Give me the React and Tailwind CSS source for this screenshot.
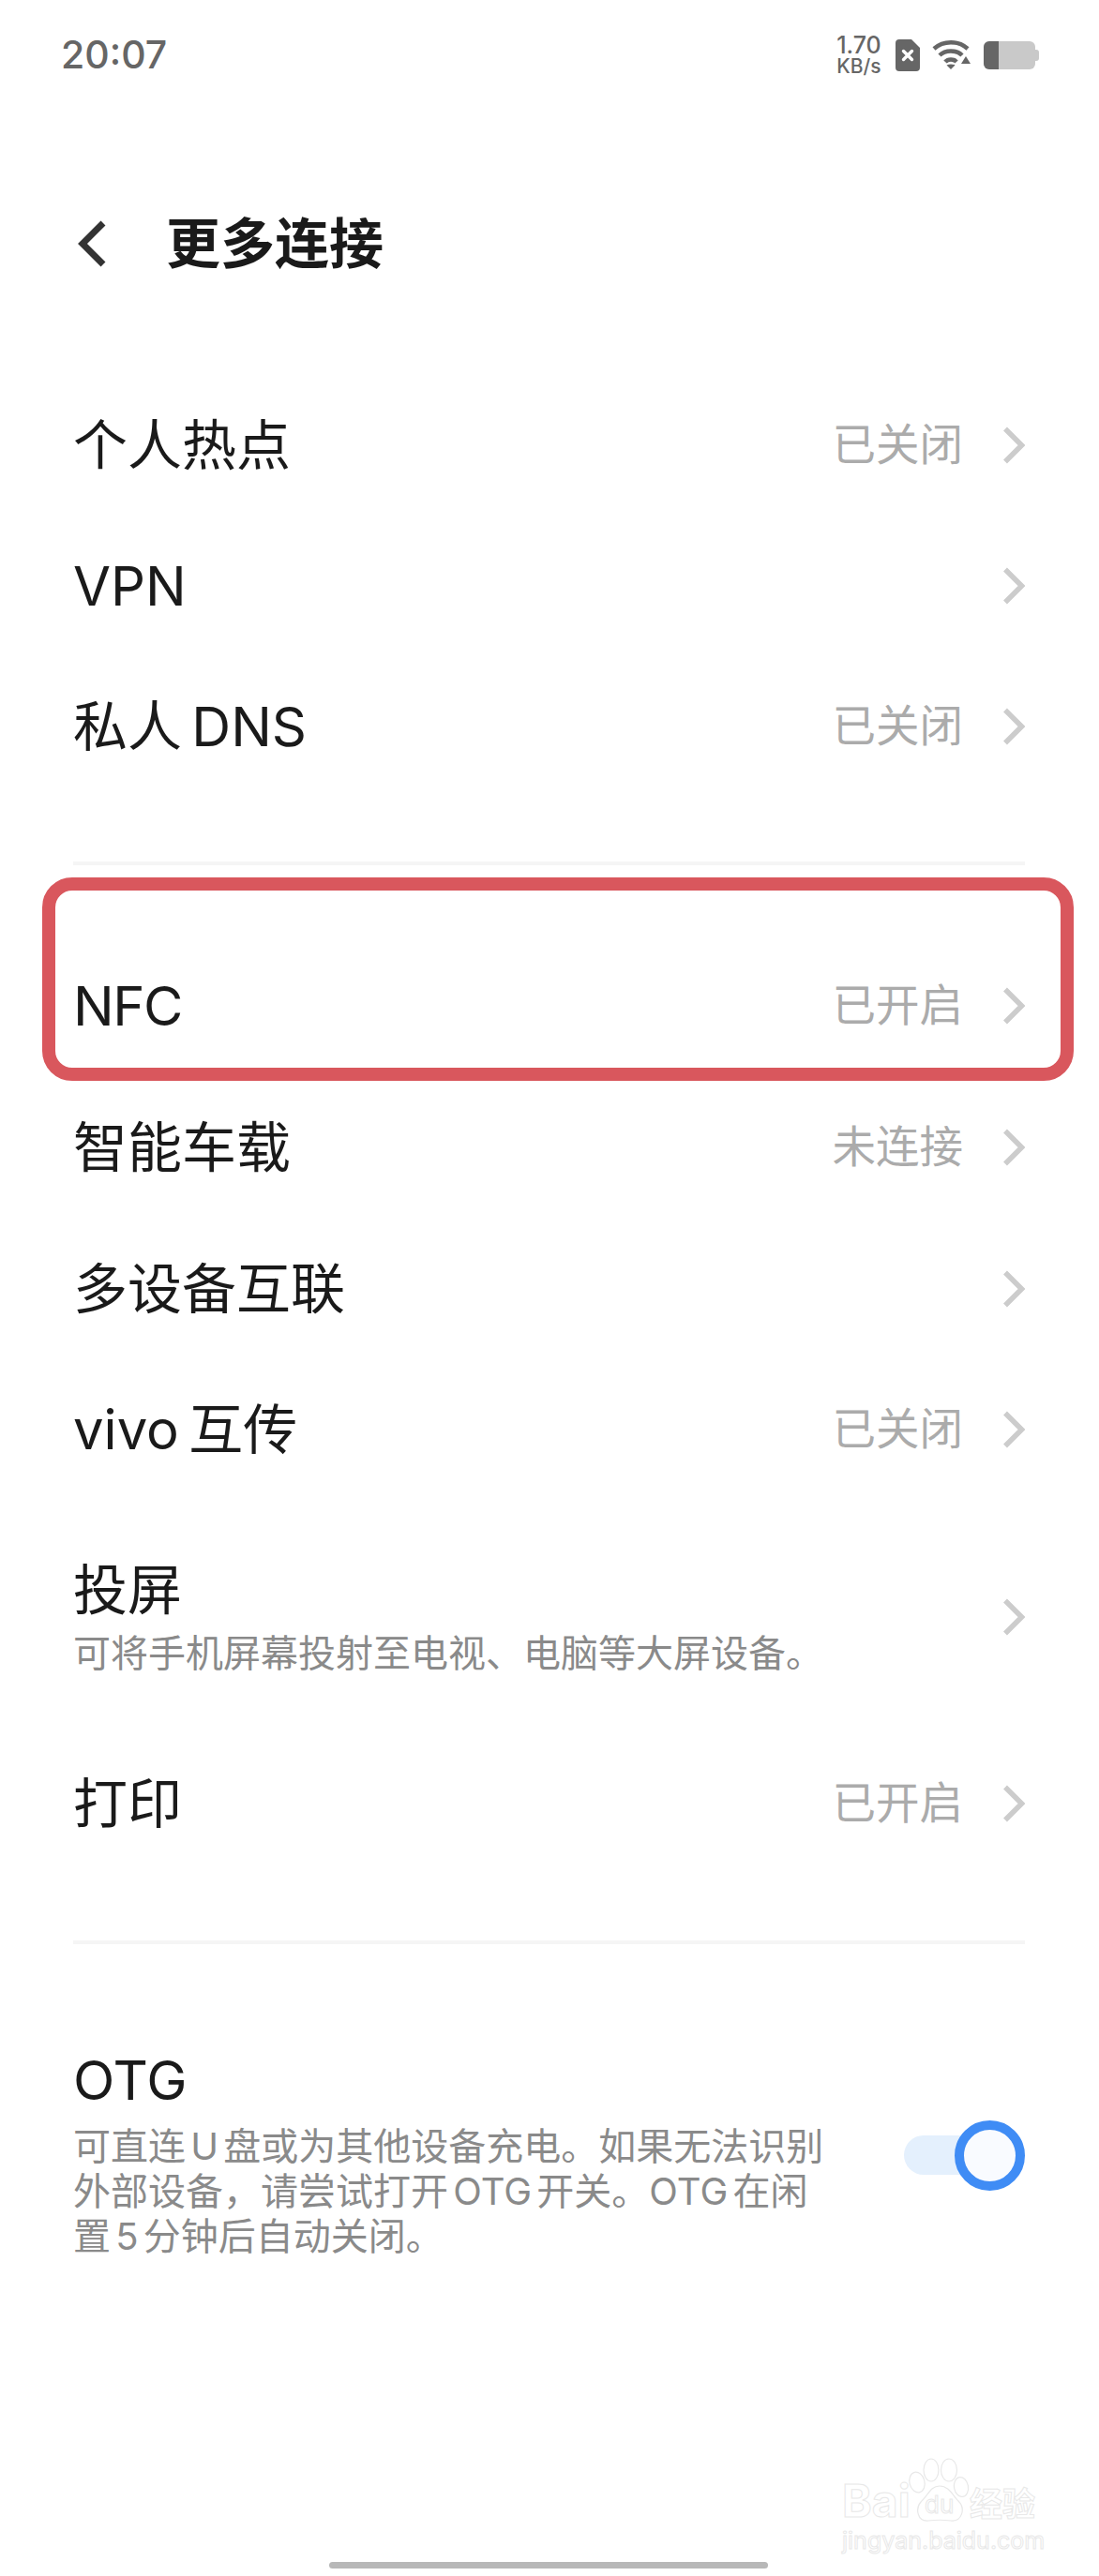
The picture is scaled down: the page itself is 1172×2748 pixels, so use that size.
import React from "react";

const font = { fontFamily: 'Inter, "Noto Sans CJK SC", sans-serif' };

const Chevron = () => (
    <svg width="24" height="40" viewBox="0 0 24 40" fill="none" className="ml-[42px] shrink-0">
        <path d="M3 2.5 L20.5 20 L3 37.5" stroke="#cccccc" strokeWidth="5.5" />
    </svg>
);

const Row = ({ title, value, sub, className = "h-[150px]", titleClass = "" }) => (
    <div className={`flex items-center justify-between ${className}`}>
        <div>
            <div className={`text-[58px] leading-[70px] text-[#1a1a1a] [word-spacing:-6px] ${titleClass}`}>{title}</div>
            {sub && <div className="mt-[8px] text-[40px] leading-[50px] text-[#8a8a8a]">{sub}</div>}
        </div>
        <div className="flex items-center">
            {value && <span className="text-[46.5px] text-[#ababab]">{value}</span>}
            <Chevron />
        </div>
    </div>
);

const StatusIcons = () => (
    <div className="flex items-center">
        <div className="flex w-[50px] flex-col items-center font-medium text-[#666666]">
            <span className="text-[25px] leading-[23px]">1.70</span>
            <span className="text-[21px] leading-[21px]">KB/s</span>
        </div>
        <svg width="26" height="34" viewBox="0 0 26 34" className="ml-[14px]">
            <path d="M4 0 H17 L26 9 V30 a4 4 0 0 1 -4 4 H4 a4 4 0 0 1 -4 -4 V4 a4 4 0 0 1 4 -4 Z" fill="#666666" />
            <path d="M8.5 12.5 L17.5 21.5 M17.5 12.5 L8.5 21.5" stroke="#ffffff" strokeWidth="3.4" strokeLinecap="round" />
        </svg>
        <svg width="42" height="32" viewBox="0 0 42 32" fill="none" className="ml-[13px]">
            <path d="M2 9 C12 0 28 0 38 9" stroke="#666666" strokeWidth="4.5" />
            <path d="M8 16 C14 10 26 10 32 16" stroke="#666666" strokeWidth="4.5" />
            <path d="M14 23 C17 19.5 23 19.5 26 23" stroke="#666666" strokeWidth="4.5" />
            <path d="M20 31 L15.5 26.5 C18 25 22 25 24.5 26.5 Z" fill="#666666" />
            <path d="M36 17 L41 25 H31 Z" fill="#666666" />
        </svg>
        <div className="ml-[13px] flex items-center">
            <div className="flex h-[30px] w-[55px] overflow-hidden rounded-[6px] bg-[#c9c9c9]">
                <div className="h-full w-[16px] bg-[#666666]" />
            </div>
            <div className="h-[12px] w-[4px] rounded-r-[3px] bg-[#c9c9c9]" />
        </div>
    </div>
);

const Watermark = () => (
    <div className="absolute left-[898px] top-[2620px] w-[212px] text-transparent [-webkit-text-stroke:1px_#e8e8e8]">
        <div className="relative h-[76px]">
            <svg width="212" height="76" viewBox="0 0 212 76" fill="none" stroke="#e8e8e8" strokeWidth="1.2" className="absolute left-0 top-0">
                <ellipse cx="80" cy="28" rx="8" ry="11" transform="rotate(-15 80 28)" />
                <ellipse cx="95" cy="15" rx="8" ry="12" />
                <ellipse cx="114" cy="15" rx="8.5" ry="12" />
                <ellipse cx="127" cy="33" rx="7.5" ry="10.5" transform="rotate(-10 127 33)" />
                <path d="M104 32 C114 32 118 42 124 48 C132 56 128 70 116 69 C108 68 100 68 92 69 C80 70 78 56 84 49 C92 42 94 32 104 32 Z" />
            </svg>
            <div className="absolute bottom-[4px] left-0 text-[48px] font-bold leading-[48px]">Bai</div>
            <div className="absolute bottom-[9px] left-[88px] text-[26px] leading-[30px]">du</div>
            <div className="absolute bottom-[4px] left-[136px] text-[35px] font-bold leading-[42px]">经验</div>
        </div>
        <div className="text-[25px] leading-[28px]">jingyan.baidu.com</div>
    </div>
);

export default function App() {
    return (
        <div className="relative h-[2748px] w-[1172px] overflow-hidden bg-white" style={font}>
            {/* status bar */}
            <div className="flex h-[118px] items-center justify-between pl-[65px] pr-[64px]">
                <span className="text-[41px] font-medium text-[#666666]">20:07</span>
                <StatusIcons />
            </div>

            {/* header */}
            <div className="mt-[84px] flex h-[116px] items-center pl-[82px]">
                <svg width="32" height="52" viewBox="0 0 32 52" fill="none">
                    <path d="M28 4 L6 26 L28 48" stroke="#333333" strokeWidth="7" />
                </svg>
                <h1 className="ml-[63px] text-[58px] font-bold text-[#1a1a1a]">更多连接</h1>
            </div>

            <div className="mt-[82px] pl-[78px] pr-[79px]">
                <Row title="个人热点" value="已关闭" />
                <Row title="VPN" />
                <Row title="私人 DNS" value="已关闭" />
                <div className="mt-[69px] mb-[76px] h-[4px] bg-[#f5f5f5]" />
                <Row title="NFC" value="已开启" className="h-[148px]" titleClass="tracking-[-1.5px]" />
                <Row title="智能车载" value="未连接" className="h-[153px]" />
                <Row title="多设备互联" />
                <Row title="vivo 互传" value="已关闭" />
                <Row
                    title="投屏"
                    sub="可将手机屏幕投射至电视、电脑等大屏设备。"
                    className="h-[249px]"
                />
                <Row title="打印" value="已开启" />
                <div className="mt-[71px] h-[4px] bg-[#f5f5f5]" />

                {/* OTG */}
                <div className="mt-[110px] flex items-center justify-between">
                    <div className="w-[810px]">
                        <div className="text-[58px] leading-[70px] text-[#1a1a1a]">OTG</div>
                        <p className="mt-[12px] text-[40px] leading-[48px] text-[#8a8a8a] [word-spacing:-6px]">
                            可直连 U 盘或为其他设备充电。如果无法识别外部设备，请尝试打开 OTG 开关。OTG 在闲置 5 分钟后自动关闭。
                        </p>
                    </div>
                    <div className="mt-[4px] flex items-center">
                        <div className="-mr-[20px] h-[42px] w-[74px] rounded-l-full bg-[#e4f0fd]" />
                        <div className="relative h-[75px] w-[75px] rounded-full border-[10px] border-[#3f8cf5] bg-[#f9fbff]" />
                    </div>
                </div>
            </div>

            {/* red annotation */}
            <div className="absolute left-[45px] top-[936px] h-[217px] w-[1100px] rounded-[32px] border-[14px] border-[#d9575d]" />

            <Watermark />

            {/* home indicator */}
            <div className="absolute bottom-[8px] left-[351px] h-[7px] w-[468px] rounded-full bg-[#b8b8b8]" />
        </div>
    );
}
